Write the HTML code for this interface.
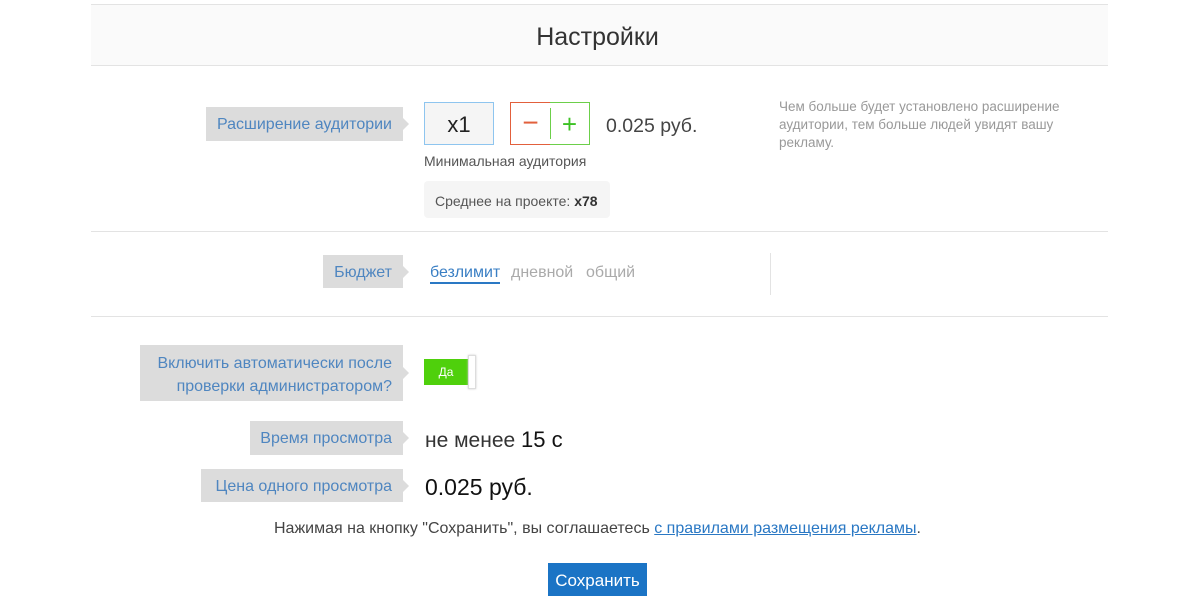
<!DOCTYPE html>
<html><head><meta charset="utf-8"><style>
*{margin:0;padding:0;box-sizing:border-box}
body{width:1200px;height:600px;background:#fff;font-family:"Liberation Sans","Noto Sans CJK SC",sans-serif;position:relative;overflow:hidden}
.a{position:absolute;white-space:nowrap}
.hdr{left:91px;top:4px;width:1017px;height:62px;background:#fafafa;border-top:1px solid #e3e3e3;border-bottom:1px solid #e3e3e3}
.hr{left:91px;width:1017px;height:1px;background:#e3e3e3}
.lbl{background:#dcdcdc;color:#4f86c0;font-size:16px;text-align:right;padding-right:11px}
.lbl:after{content:"";position:absolute;right:-6px;top:50%;margin-top:-6px;border-left:6px solid #dcdcdc;border-top:6px solid transparent;border-bottom:6px solid transparent}
</style></head><body>
<div class="a hdr"></div>
<div class="a" style="left:0;width:1195px;top:23px;text-align:center;font-size:25px;color:#333">Настройки</div>

<div class="a lbl" style="left:206px;top:107px;width:197px;height:34px;line-height:36px">Расширение аудитории</div>
<div class="a" style="left:424px;top:102px;width:70px;height:43px;border:1px solid #8ec5ef;background:#f5f5f5;text-align:center;line-height:43px;font-size:22px;color:#222">x1</div>
<div class="a" style="left:510px;top:102px;width:40px;height:43px;border:1px solid #e2603c;border-right:none;text-align:center;line-height:40px;font-size:28px;color:#e2603c">−</div>
<div class="a" style="left:550px;top:102px;width:40px;height:43px;border:1px solid #6ccf4a;border-left:none;text-align:center;line-height:42px;font-size:26px;color:#3cc224">+</div>
<div class="a" style="left:550px;top:108px;width:1px;height:31px;background:#6ccf4a"></div>
<div class="a" style="left:606px;top:115px;font-size:19.5px;color:#444">0.025 руб.</div>
<div class="a" style="left:779px;top:98px;font-size:13.5px;color:#999;line-height:18px;white-space:normal;width:310px">Чем больше будет установлено расширение аудитории, тем больше людей увидят вашу рекламу.</div>
<div class="a" style="left:424px;top:153px;font-size:14px;color:#555">Минимальная аудитория</div>
<div class="a" style="left:424px;top:181px;width:186px;height:37px;background:#f5f5f5;border-radius:4px;font-size:14px;color:#555;line-height:40px;padding-left:11px">Среднее на проекте: <b style="color:#333">x78</b></div>

<div class="a hr" style="top:231px"></div>
<div class="a lbl" style="left:323px;top:255px;width:80px;height:33px;line-height:35px">Бюджет</div>
<div class="a" style="left:430px;top:264px;font-size:16px;color:#3a7fc4">безлимит</div>
<div class="a" style="left:430px;top:282px;width:70px;height:2px;background:#2a78c4"></div>
<div class="a" style="left:511px;top:264px;font-size:16px;color:#aaa">дневной</div>
<div class="a" style="left:586px;top:264px;font-size:16px;color:#aaa">общий</div>
<div class="a" style="left:770px;top:253px;width:1px;height:42px;background:#e3e3e3"></div>
<div class="a hr" style="top:316px"></div>

<div class="a lbl" style="left:140px;top:345px;width:263px;height:56px;line-height:23px;padding-top:7px">Включить автоматически после<br>проверки администратором?</div>
<div class="a" style="left:424px;top:359px;width:44px;height:26px;background:#4fd00c;color:#fff;font-size:12px;text-align:center;line-height:26px">Да</div>
<div class="a" style="left:468px;top:355px;width:8px;height:34px;background:#fff;border:1px solid #ddd;box-shadow:0 0 2px #ccc"></div>

<div class="a lbl" style="left:250px;top:421px;width:153px;height:34px;line-height:36px">Время просмотра</div>
<div class="a" style="left:425px;top:427px;font-size:21px;color:#333">не менее <span style="color:#111;font-size:22px">15 с</span></div>
<div class="a lbl" style="left:201px;top:469px;width:202px;height:33px;line-height:36px">Цена одного просмотра</div>
<div class="a" style="left:425px;top:474px;font-size:23px;color:#111">0.025 руб.</div>

<div class="a" style="left:0;width:1195px;top:520px;text-align:center;font-size:16px;color:#444">Нажимая на кнопку "Сохранить", вы соглашаетесь <span style="color:#2a78c4;text-decoration:underline">с правилами размещения рекламы</span>.</div>
<div class="a" style="left:548px;top:563px;width:99px;height:33px;background:#1b74c5;color:#fff;font-size:17px;text-align:center;line-height:35px">Сохранить</div>
</body></html>
